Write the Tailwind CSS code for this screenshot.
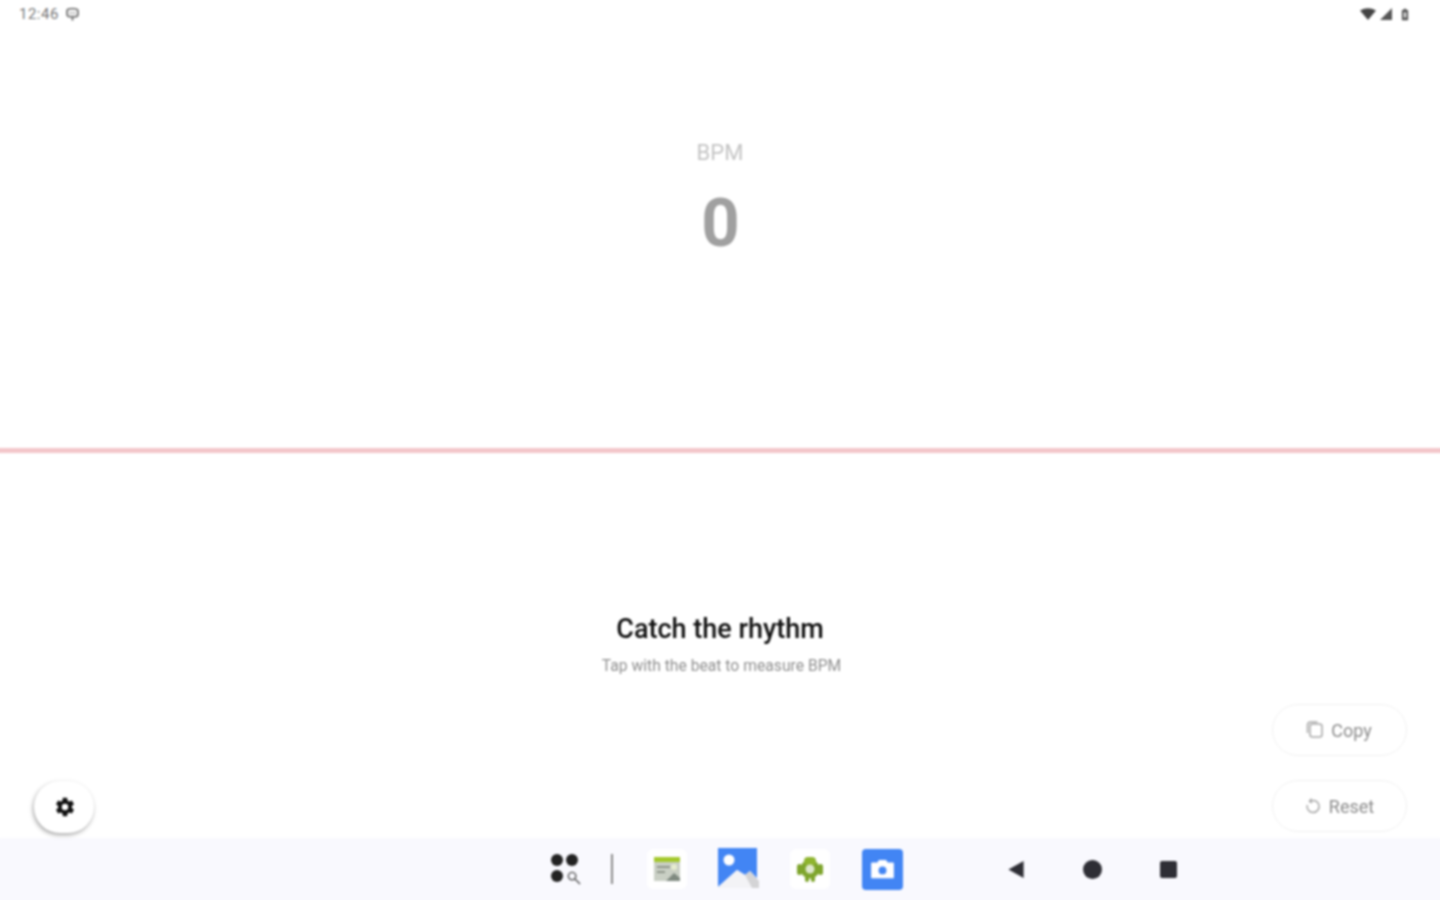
<!DOCTYPE html>
<html lang="en">
<head>
<meta charset="utf-8">
<title>BPM</title>
<script src="https://cdn.jsdelivr.net/npm/@tailwindcss/browser@4"></script>
</head>
<body class="h-[900px] overflow-hidden bg-white">
<div class="relative flex h-[900px] w-[1440px] flex-col bg-white font-['Roboto',sans-serif] blur-[0.8px]">
  <!-- Status bar -->
  <div class="flex h-7 items-center justify-between pl-[19px] pr-[31px]">
    <div class="flex items-center gap-[6px] text-[15px] leading-none tracking-[0.5px] text-[#777]">
      <span>12:46</span>
      <svg width="15" height="15" viewBox="0 0 14 14" fill="none" stroke="#777" stroke-width="1.800"><path d="M2 3.500C2 2 3.500 1.500 7 1.500s5 .5 5 2V7c0 1-1 2-2.500 2h-5C3 9 2 8 2 7z"/><path d="M5.500 5v1M8.500 5v1M7 9v3.500"/></svg>
    </div>
    <div class="flex items-center">
      <svg width="16" height="12" viewBox="0 0 16 12"><path d="M0 2.500Q8-2 16 2.500L8 12z" fill="#444"/></svg>
      <svg class="ml-1" width="12" height="12" viewBox="0 0 12 12"><path d="M12 0v12H0z" fill="#555"/></svg>
      <svg class="ml-[9px]" width="8" height="13" viewBox="0 0 9 13" fill="none"><path d="M3 0h3v1.500h2V13H1V1.500h2z" fill="#555"/><rect x="3" y="4" width="3" height="6" fill="#ddd"/></svg>
    </div>
  </div>

  <!-- Reading -->
  <div class="flex h-[420px] flex-col items-center pt-[113px]">
    <p class="text-[22px] leading-6 text-[#c4c4c4]">BPM</p>
    <p class="mt-5 pl-[1px] text-[67px] font-bold leading-[76px] text-[#a0a0a0]">0</p>
  </div>

  <!-- Divider -->
  <div class="-mx-2 h-[5px] bg-[#f3c6ca]"></div>

  <!-- Hint -->
  <div class="flex flex-1 flex-col items-center pt-[160px]">
    <p class="text-[27px] font-medium leading-8 text-[#111]">Catch the rhythm</p>
    <p class="mt-[11px] pl-[3px] text-[15.7px] leading-5 text-[#909090]">Tap with the beat to measure BPM</p>
  </div>

  <!-- Bottom nav -->
  <div class="-mx-2 flex h-[62px] items-center bg-[#f9f9fe] pl-[559px] shadow-[0_8px_0_#f9f9fe]">
    <div class="grid grid-cols-[12px_14px] gap-x-[3px] gap-y-[4px]">
      <span class="h-3 w-3 rounded-full bg-[#222]"></span>
      <span class="h-3 w-3 rounded-full bg-[#222]"></span>
      <span class="h-3 w-3 rounded-full bg-[#222]"></span>
      <svg width="15" height="15" viewBox="0 0 16 16" fill="none" stroke="#555" stroke-width="1.500"><circle cx="6.500" cy="6.500" r="4"/><path d="M9.500 9.500L15 15"/></svg>
    </div>
    <div class="ml-[31px] h-[30px] w-[2px] bg-[#8a8a8a]"></div>
    <div class="ml-[34px] flex h-10 w-10 items-center justify-center rounded-md bg-white">
      <svg width="26" height="24" viewBox="0 0 26 24"><rect width="26" height="24" fill="#c9cfc4"/><rect width="26" height="5" fill="#a4c92c"/><path d="M3 9h13v2H3zM3 14h8v2H3z" fill="#8e958a"/><circle cx="20" cy="10" r="3" fill="#e6eccf"/><path d="M12 24l8-8 6 5v3z" fill="#7f8a80"/></svg>
    </div>
    <svg class="ml-[30px] -mt-[2px]" width="42" height="40" viewBox="0 0 42 40"><path d="M1 0h39v30l-7-7-5 4-8-5L1 39z" fill="#4285f4"/><circle cx="12" cy="12" r="5.500" fill="#fff"/><path d="M1 39L20 22l8 5 7 13H2z" fill="#f3f3f6"/><path d="M28 27l5-4 9 10v7h-7z" fill="#d4d4d6"/></svg>
    <div class="ml-[31px] flex h-10 w-10 items-center justify-center rounded-md bg-white">
      <svg width="26" height="28" viewBox="0 0 26 28"><circle cx="13" cy="14" r="9.500" fill="#7ea52c"/><rect x="0" y="9" width="5" height="11" rx="2.500" fill="#7ea52c"/><rect x="21" y="9" width="5" height="11" rx="2.500" fill="#7ea52c"/><rect x="7" y="2" width="12" height="8" rx="4" fill="#8fb52f"/><rect x="8" y="21" width="4" height="6" rx="2" fill="#7ea52c"/><rect x="14" y="21" width="4" height="6" rx="2" fill="#7ea52c"/><circle cx="13" cy="14" r="4.500" fill="#dfe8cd"/></svg>
    </div>
    <div class="ml-8 flex h-[41px] w-[41px] items-center justify-center rounded-[4px] bg-[#4285f4]">
      <svg width="27" height="21" viewBox="0 0 28 24"><path d="M2 4h6l2-3h8l2 3h6a1 1 0 0 1 1 1v16a1 1 0 0 1-1 1H2a1 1 0 0 1-1-1V5a1 1 0 0 1 1-1z" fill="#fff"/><circle cx="14" cy="13" r="4.500" fill="#4285f4"/></svg>
    </div>
    <svg class="ml-[104px]" width="18" height="19" viewBox="0 0 18 20"><path d="M17 1v18L1 10z" fill="#2e2e35"/></svg>
    <span class="ml-[58px] h-[19px] w-[19px] rounded-full bg-[#2e2e35]"></span>
    <span class="ml-[58px] h-[17px] w-[17px] rounded-[2px] bg-[#2e2e35]"></span>
  </div>

  <!-- Floating buttons -->
  <button class="absolute left-[34px] top-[781px] flex h-[52px] w-[60px] items-center justify-center rounded-full bg-white pl-[2px] shadow-[-1px_2px_4px_rgba(0,0,0,0.35)]">
    <svg width="22" height="22" viewBox="0 0 24 24" fill="#111"><path d="M19.430 12.980c.04-.32.07-.64.07-.98s-.03-.66-.07-.98l2.110-1.650c.190-.150.240-.420.120-.640l-2-3.460c-.120-.220-.390-.300-.610-.220l-2.490 1c-.520-.400-1.080-.730-1.690-.980l-.380-2.650A.488.488 0 0 0 14 2h-4c-.250 0-.460.180-.490.420l-.380 2.650c-.610.250-1.170.590-1.690.980l-2.490-1c-.230-.090-.490 0-.610.220l-2 3.460c-.130.220-.070.490.120.640l2.110 1.650c-.040.320-.070.650-.070.980s.03.660.07.980l-2.110 1.650c-.190.150-.240.420-.120.640l2 3.460c.120.220.390.300.610.220l2.490-1c.520.400 1.080.730 1.690.980l.380 2.650c.030.240.240.420.490.420h4c.250 0 .460-.180.490-.420l.380-2.650c.610-.250 1.170-.590 1.690-.980l2.490 1c.230.090.490 0 .610-.220l2-3.460c.120-.220.070-.490-.120-.640zM12 15.500a3.500 3.500 0 1 1 0-7 3.500 3.500 0 0 1 0 7z"/></svg>
  </button>

  <button class="absolute left-[1272px] top-[704px] flex h-[52px] w-[135px] items-center justify-center gap-[7px] rounded-full border border-[#f1f1f1] bg-white pr-[1px] text-[18px] text-[#8c8c8c]">
    <svg width="18" height="18" viewBox="0 0 18 18" fill="none" stroke="#a8a8a8" stroke-width="1.500"><rect x="4" y="3" width="12" height="13" rx="2.500"/><path d="M1.500 12V4a3 3 0 0 1 3-3h7"/></svg>
    <span>Copy</span>
  </button>
  <button class="absolute left-[1272px] top-[780px] flex h-[52px] w-[135px] items-center justify-center gap-2 rounded-full border border-[#f1f1f1] bg-white text-[18px] text-[#8c8c8c]">
    <svg width="16" height="16" viewBox="0 0 16 16" fill="none" stroke="#a8a8a8" stroke-width="1.500"><path d="M5 3.300A6 6 0 1 1 2.300 7"/><path d="M6.500 0.800L4.500 3.300 7 5" /></svg>
    <span>Reset</span>
  </button>
</div>
</body>
</html>
